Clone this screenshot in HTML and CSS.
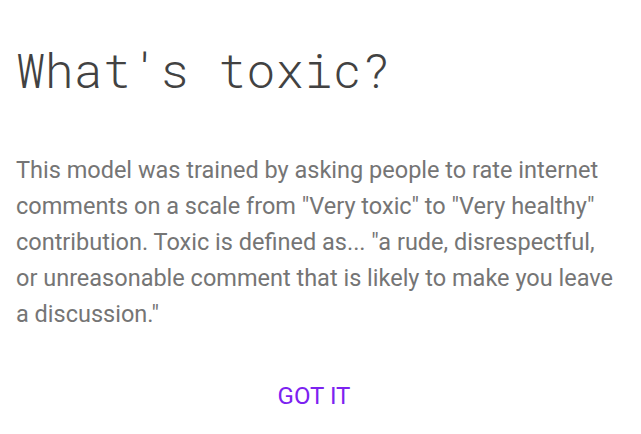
FILE: index.html
```html
<!DOCTYPE html>
<html lang="en">
  <head>
    <meta charset="UTF-8" />
    <title>What's toxic?</title>
    <link rel="stylesheet" href="styles.css">
  </head>
  <body>
    <div class="dialog">
      <h1 class="dialog-title">What's toxic?</h1>
      <p class="dialog-text">
        This model was trained by asking people to rate internet comments on a
        scale from "Very toxic" to "Very healthy" contribution. Toxic is defined
        as... "a rude, disrespectful, or unreasonable comment that is likely to
        make you leave a discussion."
      </p>
      <div class="dialog-actions">
        <button class="got-it">GOT IT</button>
      </div>
    </div>
  </body>
</html>
```

FILE: styles.css
```css
html,
body {
  margin: 0;
  padding: 0;
  background: #fff;
}
.dialog {
  padding: 40px 16px 0 16px;
  font-family: "Roboto", "Liberation Sans", sans-serif;
}
.dialog-title {
  margin: 0;
  font-family: "Roboto Mono", "DejaVu Sans Mono", "Liberation Mono", monospace;
  font-weight: 300;
  font-size: 48px;
  line-height: 60px;
  color: #424242;
}
.dialog-text {
  margin: 52px 0 0 0;
  max-width: 600px;
  font-size: 23.5px;
  line-height: 36px;
  color: #757575;
}
.dialog-actions {
  display: flex;
  justify-content: center;
  margin-top: 50px;
  padding-right: 13px;
}
.got-it {
  border: none;
  background: none;
  padding: 0;
  font-family: "Roboto", "Liberation Sans", sans-serif;
  font-size: 24px;
  color: #7c22f0;
  cursor: pointer;
}
```
